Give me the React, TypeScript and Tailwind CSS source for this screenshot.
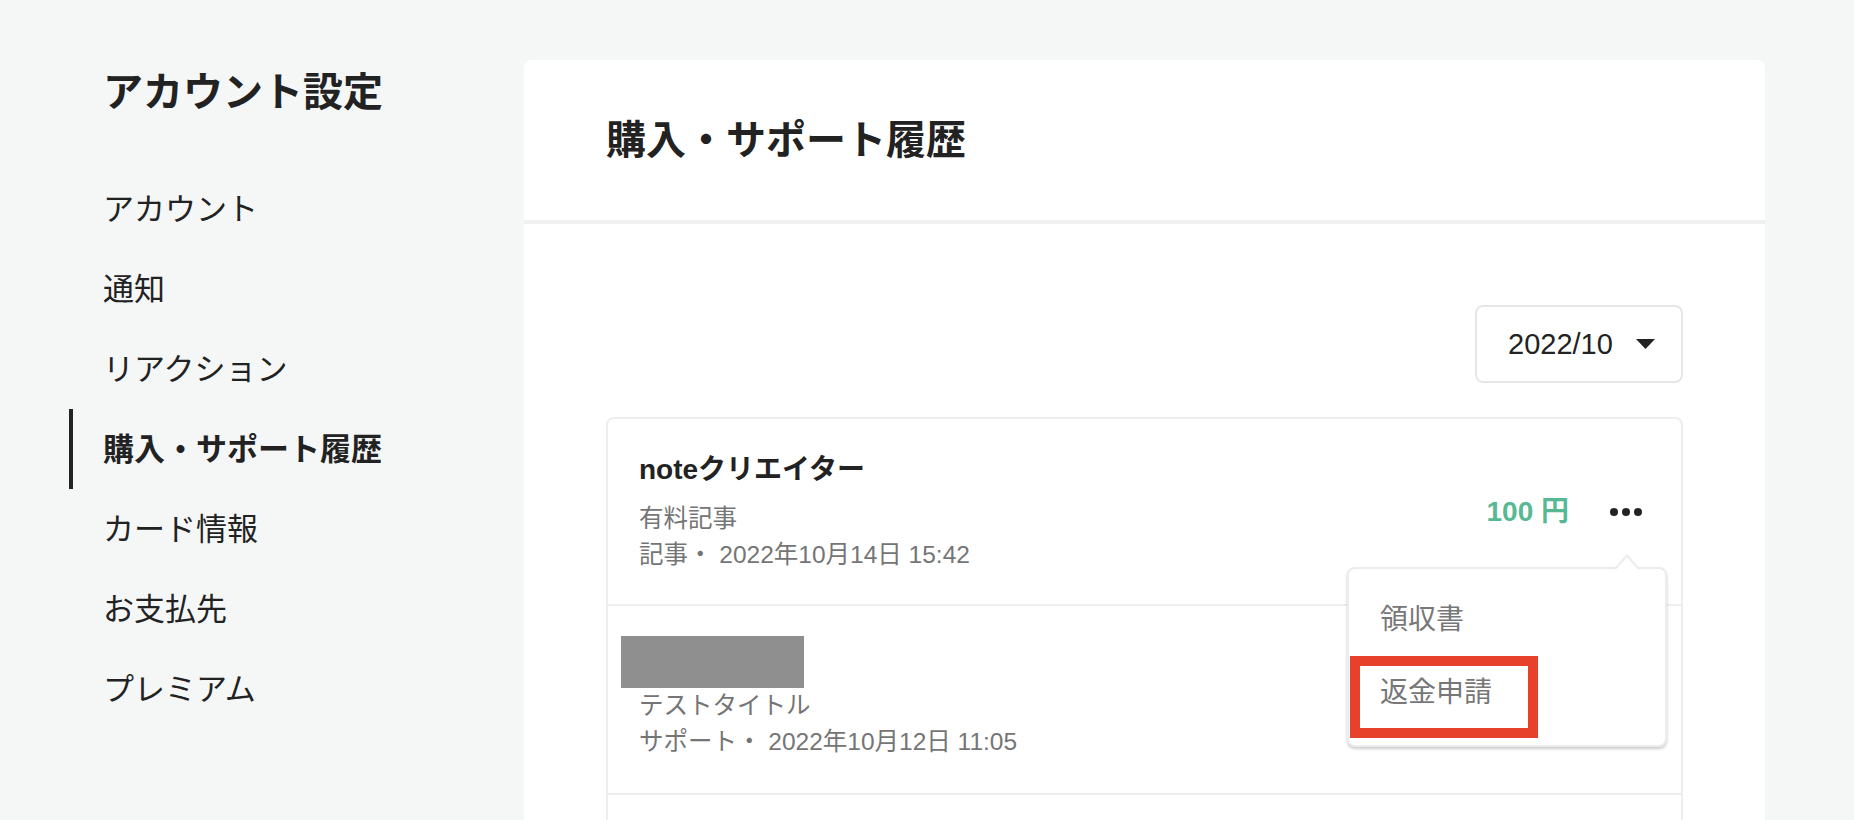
import React from "react";

const font = "font-['Liberation_Sans','Noto_Sans_CJK_JP',sans-serif]";

const navItems = [
  { label: "アカウント" },
  { label: "通知" },
  { label: "リアクション" },
  { label: "購入・サポート履歴", active: true },
  { label: "カード情報" },
  { label: "お支払先" },
  { label: "プレミアム" },
];

function Dots() {
  return (
    <svg width="32" height="8" viewBox="0 0 32 8" className="ml-[41px] shrink-0">
      <circle cx="4" cy="4" r="4" fill="#222" />
      <circle cx="16" cy="4" r="4" fill="#222" />
      <circle cx="28" cy="4" r="4" fill="#222" />
    </svg>
  );
}

export default function App() {
  return (
    <div className={`flex h-[820px] overflow-hidden bg-[#f5f7f7] text-[#222] ${font}`}>
      <aside className="w-[524px] shrink-0 pl-[69px] pt-[62px]">
        <h1 className="pl-[34px] text-[40px] font-bold leading-[60px]">アカウント設定</h1>
        <nav className="mt-[47px] flex flex-col">
          {navItems.map((item) => (
            <div
              key={item.label}
              className={`flex h-[80px] items-center border-l-4 pl-[30px] text-[31px] ${
                item.active ? "border-[#222] font-bold" : "border-transparent"
              }`}
            >
              <span className="translate-y-[1px]">{item.label}</span>
            </div>
          ))}
        </nav>
      </aside>

      <main className="mt-[60px] w-[1241px] shrink-0 self-start rounded-t-[8px] bg-white">
        <div className="flex h-[160px] items-center px-[82px]">
          <h2 className="text-[40px] font-bold">購入・サポート履歴</h2>
        </div>
        <div className="h-[4px] bg-[#f0f0f0]" />
        <div className="px-[82px] pt-[81px]">
          <div className="flex justify-end">
            <div className="flex h-[78px] w-[208px] items-center rounded-[8px] border-2 border-[#e6e6e6] pl-[31px]">
              <span className="text-[29px] leading-none">2022/10</span>
              <svg width="19" height="10" viewBox="0 0 19 10" className="ml-[23px]">
                <polygon points="0,0 19,0 9.5,10" fill="#222" />
              </svg>
            </div>
          </div>

          <div className="relative mt-[34px] rounded-t-[8px] border-2 border-b-0 border-[#eeeeee]">
            {/* item 1 */}
            <div className="flex h-[185px] items-center justify-between pl-[31px] pr-[39px]">
              <div className="flex flex-col">
                <div className="text-[28px] font-bold leading-[40px]">noteクリエイター</div>
                <div className="mt-[11px] text-[24.5px] leading-[36px] text-[#757575]">有料記事</div>
                <div className="text-[24.5px] leading-[36px] text-[#757575]">記事・ 2022年10月14日 15:42</div>
              </div>
              <div className="flex items-center">
                <span className="text-[28px] font-bold leading-none text-[#57b894]">100 円</span>
                <Dots />
              </div>
            </div>

            {/* item 2 */}
            <div className="flex flex-col border-t-2 border-[#eeeeee] pb-[33px] pl-[31px] pt-[30px]">
              <div className="-ml-[18px] h-[52px] w-[183px] bg-[#8f8f8f]" />
              <div className="text-[24.5px] leading-[36px] text-[#757575]">テストタイトル</div>
              <div className="text-[24.5px] leading-[36px] text-[#757575]">サポート・ 2022年10月12日 11:05</div>
            </div>

            {/* item 3 */}
            <div className="h-[120px] border-t-2 border-[#eeeeee]" />

            {/* popup menu */}
            <div className="absolute left-[739px] top-[148px] h-[180px] w-[320px] rounded-[8px] border-2 border-[#ececec] bg-white shadow-[0_2px_3px_rgba(0,0,0,0.2)]">
              <svg
                width="24"
                height="16"
                viewBox="0 0 24 16"
                className="absolute left-[266px] top-[-15px]"
              >
                <polygon points="0,16 12,2 24,16" fill="#fff" />
                <polyline points="0,15 12,1.5 24,15" fill="none" stroke="#ececec" strokeWidth="2" />
              </svg>
              <div className="flex flex-col gap-[33px] pl-[31px] pt-[31px]">
                <div className="h-[40px] text-[28px] leading-[40px] text-[#777]">領収書</div>
                <div className="h-[40px] text-[28px] leading-[40px] text-[#777]">返金申請</div>
              </div>
              <div className="absolute left-[1px] top-[87px] h-[82px] w-[188px] border-[10px] border-[#e8412b]" />
            </div>
          </div>
        </div>
      </main>
    </div>
  );
}
